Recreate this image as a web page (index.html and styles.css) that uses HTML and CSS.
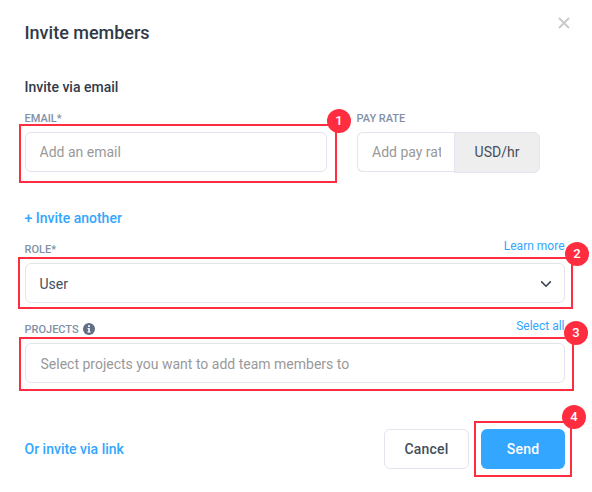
FILE: index.html
```html
<!DOCTYPE html>
<html lang="en">
<head>
  <title>Invite members</title>
  <meta charset="UTF-8">
  <link rel="stylesheet" href="styles.css">
</head>
<body>
  <div class="modal">
    <div class="modal-header">
      <h1 class="title">Invite members</h1>
      <button class="close" aria-label="Close">
        <svg width="12" height="12" viewBox="0 0 12 12"><path d="M1 1l10 10M11 1L1 11" stroke="#c8c8c8" stroke-width="1.8" fill="none"/></svg>
      </button>
    </div>
    <h2 class="subtitle">Invite via email</h2>
    <div class="email-row">
      <div class="field email-field">
        <div class="field-head"><label class="label" for="email">EMAIL*</label></div>
        <div class="control">
          <input class="input" type="text" id="email" placeholder="Add an email">
          <div class="highlight highlight-email"><span class="badge">1</span></div>
        </div>
      </div>
      <div class="field">
        <div class="field-head"><label class="label" for="rate">PAY RATE</label></div>
        <div class="rate">
          <input class="input rate-input" type="text" id="rate" placeholder="Add pay rate">
          <span class="rate-unit">USD/hr</span>
        </div>
      </div>
    </div>
    <a class="link invite-another">+ Invite another</a>
    <div class="field role-field">
      <div class="field-head">
        <span class="label">ROLE*</span>
        <a class="small-link">Learn more</a>
      </div>
      <div class="control">
        <div class="input select">
          <span>User</span>
          <svg width="12" height="8" viewBox="0 0 12 8"><path d="M1.2 1.4L6 6.2l4.8-4.8" stroke="#35414f" stroke-width="1.5" fill="none"/></svg>
        </div>
        <div class="highlight highlight-role"><span class="badge">2</span></div>
      </div>
    </div>
    <div class="field projects-field">
      <div class="field-head">
        <label class="label" for="projects">PROJECTS
          <svg class="info" width="12" height="12" viewBox="0 0 12 12"><circle cx="6" cy="6" r="6" fill="#616e85"/><path d="M5.1 2.3h1.8v1.6H5.1zM4.5 4.9h2.3v3.5h.8v1H4.4v-1h.8V5.9h-.7z" fill="#fff"/></svg>
        </label>
        <a class="small-link">Select all</a>
      </div>
      <div class="control">
        <input class="input projects-input" type="text" id="projects" placeholder="Select projects you want to add team members to">
        <div class="highlight highlight-projects"><span class="badge">3</span></div>
      </div>
    </div>
    <div class="footer">
      <a class="link">Or invite via link</a>
      <div class="buttons">
        <button class="button">Cancel</button>
        <div class="control">
          <button class="button button-primary">Send</button>
          <div class="highlight highlight-send"><span class="badge">4</span></div>
        </div>
      </div>
    </div>
  </div>
</body>
</html>
```
FILE: styles.css
```css
* {
  box-sizing: border-box;
}

body {
  margin: 0;
  font-family: Roboto, sans-serif;
  font-size: 14px;
  color: #434e5c;
  background-color: #fff;
}

.modal {
  width: 565px;
  min-height: 492px;
  padding: 22px 0 0 25px;
}

.modal-header {
  display: flex;
  justify-content: space-between;
  height: 22px;
}

.title,
.subtitle {
  margin: 0;
  font-weight: 500;
  color: #303a48;
}

.title {
  font-size: 18px;
  line-height: 22px;
}

.subtitle {
  margin-top: 33px;
  font-size: 14px;
  line-height: 20px;
}

.title,
.subtitle,
.label,
.link {
  text-indent: -0.5px;
}

.close {
  width: 12px;
  height: 12px;
  margin: -5px -4.5px 0 0;
  padding: 0;
  border: none;
  background: none;
}

.close svg {
  display: block;
}

.email-row {
  display: flex;
  gap: 30px;
  margin-top: 14px;
}

.email-field {
  width: 302px;
}

.field-head {
  display: flex;
  justify-content: space-between;
  height: 21px;
}

.label {
  margin-top: 1px;
  font-size: 11px;
  font-weight: 500;
  line-height: 14px;
  color: #8290a5;
}

.info {
  margin-left: 2px;
  vertical-align: -2px;
}

.control {
  position: relative;
}

.input {
  display: block;
  width: 100%;
  height: 40px;
  padding: 0 13.5px;
  border: 1px solid #e2e5ee;
  border-radius: 6px;
  background-color: #fff;
  font: inherit;
  color: inherit;
}

.input::placeholder {
  color: #999;
}

.rate {
  display: flex;
}

.rate-input {
  width: 98px;
  padding: 0 14px;
  border-right: none;
  border-radius: 6px 0 0 6px;
}

.rate-unit {
  width: 86px;
  height: 41px;
  margin-left: -1px;
  border: 1px solid #e2e5ee;
  border-radius: 0 6px 6px 0;
  background-color: #eee;
  line-height: 39px;
  text-align: center;
}

.link {
  font-weight: 500;
  line-height: 20px;
  color: #33a6ff;
}

.invite-another {
  display: block;
  margin-top: 35px;
}

.small-link {
  margin: -3px 0.5px 0 0;
  font-size: 12px;
  line-height: 14px;
  color: #33a6ff;
}

.role-field {
  margin-top: 14px;
}

.select {
  display: flex;
  align-items: center;
  justify-content: space-between;
  padding: 2px 12.5px 0 13.5px;
}

.projects-field {
  margin-top: 19px;
}

.projects-input {
  padding: 2px 14.5px 0;
}

.footer {
  display: flex;
  align-items: center;
  justify-content: space-between;
  margin-top: 46px;
}

.buttons {
  display: flex;
  gap: 12px;
}

.button {
  display: block;
  width: 85px;
  height: 40px;
  padding: 0;
  border: 1px solid #e2e5ee;
  border-radius: 6px;
  background-color: #fff;
  font: inherit;
  font-weight: 500;
  letter-spacing: 0.2px;
  color: #434e5c;
}

.button-primary {
  width: 84px;
  border: none;
  background-color: #33a6ff;
  color: #fff;
}

/* numbered callouts */
.highlight {
  position: absolute;
  border: 2px solid #ff2d3f;
  pointer-events: none;
}

.highlight-email {
  inset: -8px -10px -11px -6px;
}

.highlight-role {
  inset: -6px -8px -6px -7px;
}

.highlight-projects {
  inset: -6px -9px -8px -6px;
}

.highlight-send {
  inset: -8px -7px -8px -7px;
}

.badge {
  position: absolute;
  top: -17px;
  right: -16px;
  width: 24px;
  height: 24px;
  border-radius: 50%;
  background-color: #ff2d3f;
  font-size: 13px;
  font-weight: 500;
  line-height: 24px;
  text-align: center;
  color: #fff;
}

.highlight-role .badge {
  right: -18px;
}

.highlight-projects .badge,
.highlight-send .badge {
  top: -18px;
}
```
